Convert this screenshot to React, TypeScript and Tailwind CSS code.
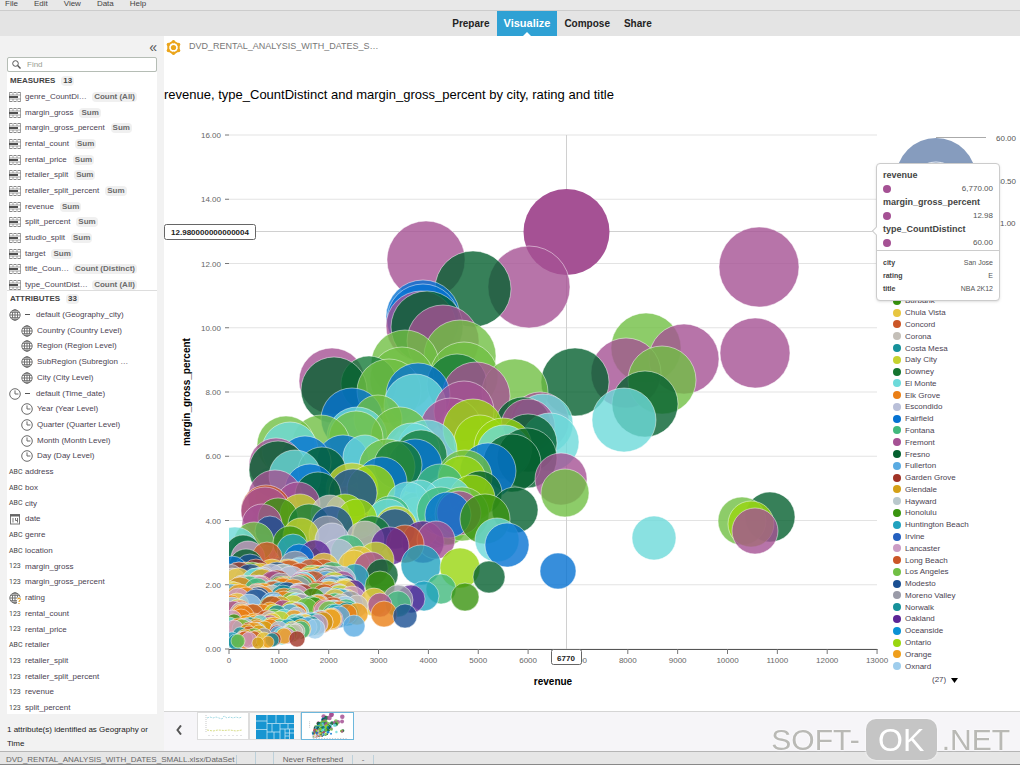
import React from "react";

const sans = "font-['Liberation_Sans',Arial,sans-serif]";

const C = {
  plum: "#a55194", forest: "#05602f", pine: "#157a38", leaf: "#71bf44", blue: "#0572d2", cyan: "#6ddada",
  lime: "#99d60f", olive: "#c5d22e", navy: "#1a4f92", teal: "#21a2bf", jade: "#41b97d", grass: "#39940f",
  violet: "#5c2596", rust: "#cb5627", brick: "#a03326", orange: "#ea7f16", amber: "#ef9f1c", gold: "#d4a017",
  sand: "#c4bfb8", steel: "#9a9ba8", sky: "#5aabe2", pink: "#cb9cc4", pale: "#9fcdec", sea: "#16919a",
  yellow: "#e7c640", lilac: "#b9bfd8", mist: "#b9c8cc", royal: "#2460c0",
};

type Bubble = [number, number, number, string];

const bubbles: Bubble[] = [
  [426, 260, 39, C.plum], [473, 289, 38, C.forest], [529, 287, 41, C.plum], [759, 267, 40, C.plum], [755, 353, 35, C.plum],
  [423, 317, 37, C.blue], [421, 326, 35, C.plum], [423, 320, 36, C.blue], [427, 327, 36, C.forest], [443, 341, 36, C.plum],
  [460, 356, 36, C.leaf], [405, 364, 34, C.leaf], [464, 376, 34, C.leaf], [332, 381, 33, C.plum], [402, 379, 32, C.leaf],
  [334, 390, 33, C.forest], [369, 384, 28, C.pine], [389, 391, 32, C.leaf], [418, 395, 32, C.blue], [415, 405, 31, C.cyan],
  [457, 384, 30, C.pine], [476, 396, 34, C.plum], [464, 411, 30, C.plum], [515, 392, 33, C.leaf], [575, 382, 34, C.forest],
  [352, 419, 31, C.blue], [357, 437, 30, C.cyan], [356, 438, 27, C.leaf], [378, 419, 24, C.leaf], [286, 445, 29, C.leaf],
  [290, 450, 28, C.cyan], [321, 444, 29, C.leaf], [400, 436, 29, C.leaf], [451, 429, 31, C.plum], [473, 429, 30, C.lime],
  [480, 441, 26, C.lime], [427, 450, 30, C.cyan], [412, 451, 28, C.cyan], [421, 456, 26, C.pine], [415, 466, 27, C.blue],
  [305, 462, 26, C.blue], [343, 461, 26, C.blue], [365, 457, 22, C.cyan], [387, 467, 28, C.leaf], [398, 465, 24, C.pine],
  [276, 465, 27, C.plum], [278, 470, 29, C.forest], [295, 476, 26, C.cyan], [322, 471, 24, C.forest], [382, 482, 25, C.blue],
  [310, 489, 25, C.blue], [318, 495, 23, C.forest], [352, 489, 26, C.olive], [353, 493, 24, C.navy], [371, 489, 24, C.lime],
  [275, 497, 27, C.plum], [298, 504, 22, C.plum], [265, 511, 24, C.plum], [266, 510, 25, C.rust], [523, 425, 28, C.forest],
  [540, 421, 29, C.plum], [528, 426, 27, C.plum], [543, 424, 30, C.cyan], [550, 442, 29, C.cyan], [528, 443, 29, C.forest],
  [527, 458, 30, C.forest], [503, 447, 29, C.lime], [504, 452, 27, C.cyan], [512, 463, 29, C.forest], [488, 471, 28, C.blue],
  [465, 477, 27, C.leaf], [462, 480, 24, C.lime], [480, 493, 22, C.forest], [440, 488, 24, C.jade], [448, 501, 24, C.cyan],
  [472, 498, 23, C.lime], [441, 511, 24, C.jade], [459, 513, 22, C.plum], [448, 515, 23, C.blue], [485, 519, 25, C.grass],
  [462, 514, 27, C.leaf], [515, 510, 23, C.forest], [561, 479, 26, C.plum], [565, 493, 24, C.leaf], [497, 540, 22, C.cyan],
  [507, 545, 22, C.blue], [558, 571, 18, C.blue], [460, 568, 20, C.lime], [489, 577, 16, C.forest], [465, 597, 14, C.grass],
  [441, 589, 15, C.jade], [424, 596, 15, C.teal], [411, 599, 14, C.violet], [405, 616, 12, C.navy], [421, 565, 20, C.teal],
  [423, 542, 21, C.violet], [436, 540, 19, C.plum], [646, 348, 35, C.leaf], [684, 359, 35, C.plum], [626, 373, 35, C.plum],
  [662, 380, 34, C.leaf], [645, 404, 33, C.forest], [624, 420, 32, C.cyan], [654, 538, 22, C.cyan], [770, 517, 25, C.forest],
  [742, 521, 24, C.leaf], [751, 524, 23, C.lime], [755, 531, 23, C.plum], [390, 546, 19, C.violet], [405, 544, 19, C.rust],
  [395, 529, 20, C.navy], [396, 527, 21, C.olive], [408, 504, 22, C.cyan], [420, 500, 20, C.cyan], [390, 516, 20, C.jade],
  [388, 520, 21, C.cyan], [357, 519, 20, C.lime], [345, 514, 20, C.lime], [332, 527, 21, C.navy], [309, 525, 21, C.pine],
  [278, 518, 20, C.grass], [300, 514, 20, C.olive], [254, 542, 20, C.leaf], [270, 531, 15, C.navy], [301, 536, 18, C.olive],
  [290, 543, 17, C.grass], [293, 550, 16, C.teal], [327, 534, 18, C.steel], [332, 540, 17, C.lilac], [365, 540, 19, C.sand],
  [372, 535, 19, C.pine], [330, 514, 19, C.sand], [371, 569, 17, C.plum], [382, 575, 16, C.forest], [376, 560, 18, C.olive],
  [355, 578, 14, C.teal], [380, 586, 15, C.grass], [354, 591, 11, C.violet], [374, 602, 14, C.yellow], [380, 605, 12, C.plum],
  [384, 614, 13, C.orange], [398, 600, 15, C.steel], [398, 604, 13, C.jade], [297, 639, 8, C.brick], [277, 633, 8, C.brick],
  [296, 613, 10, C.brick], [333, 613, 13, C.rust], [322, 622, 11, C.rust], [340, 614, 13, C.orange], [315, 629, 10, C.pale],
  [354, 626, 11, C.sky], [357, 606, 11, C.sand], [357, 614, 11, C.amber], [347, 614, 12, C.sea], [235, 550, 23, C.cyan],
  [243, 553, 18, C.forest], [248, 558, 17, C.pink], [246, 566, 17, C.forest], [250, 570, 16, C.navy], [232, 572, 16, C.blue],
  [258, 582, 14, C.olive], [318, 595, 14, C.rust], [302, 606, 12, C.pink], [324, 568, 15, C.yellow], [300, 577, 14, C.rust],
  [262, 524, 20, C.plum], [236, 642, 8, C.sea], [258, 643, 6, C.gold], [240, 634, 7, C.sea], [267, 557, 15, C.rust],
  [315, 556, 16, C.violet], [338, 556, 17, C.lilac], [348, 552, 17, C.jade], [359, 562, 16, C.yellow], [354, 566, 16, C.yellow],
  [295, 567, 16, C.steel], [299, 559, 15, C.blue], [352, 600, 14, C.pink], [345, 592, 14, C.mist], [350, 604, 13, C.steel],
  [270, 612, 10, C.amber], [268, 642, 6, C.amber], [257, 631, 9, C.pale], [247, 614, 10, C.teal], [287, 636, 8, C.pink],
  [238, 600, 12, C.pink], [246, 624, 9, C.amber], [234, 622, 8, C.grass], [316, 583, 14, C.sky], [272, 597, 12, C.mist],
];

const mix = [
  C.amber, C.teal, C.pink, C.rust, C.olive, C.sand, C.jade, C.navy, C.orange, C.sky, C.plum, C.steel, C.leaf,
  C.gold, C.lilac, C.brick, C.sea, C.yellow, C.pale, C.rust, C.grass, C.orange, C.pink, C.cyan, C.amber,
];

let seed = 20127;
function next() {
  seed = (seed * 1103515245 + 12345) % 2147483648;
  return seed / 2147483648;
}

function lowBubbles(): Bubble[] {
  const out: Bubble[] = [];
  for (let i = 0; i < 250; i++) {
    const x = 229 + next() * 118;
    const low = x < 270 ? 645 : 645 - (x - 270) * 0.32;
    const top = 568 + Math.abs(x - 290) * 0.1 + next() * 8;
    const y = top + next() * (low - top);
    const r = 6 + (648 - y) / 8 + next() * 2;
    out.push([Math.round(x), Math.round(Math.min(y, low - r * 0.6)), Math.round(r), mix[Math.floor(next() * mix.length)]]);
  }
  return out;
}

function backdropBubbles(): Bubble[] {
  const out: Bubble[] = [];
  const mid = [C.leaf, C.cyan, C.pine, C.jade, C.olive, C.plum, C.blue, C.lime];
  for (let i = 0; i < 90; i++) {
    const x = 268 + next() * 185;
    const y = 480 + next() * 50;
    out.push([Math.round(x), Math.round(y), Math.round(16 + next() * 5), mid[Math.floor(next() * mid.length)]]);
  }
  for (let i = 0; i < 70; i++) {
    const x = 240 + next() * 130;
    const y = 535 + next() * 40;
    out.push([Math.round(x), Math.round(y), Math.round(14 + next() * 4), mix[Math.floor(next() * mix.length)]]);
  }
  return out;
}

const byTop = (a: Bubble, b: Bubble) => a[1] - a[2] - (b[1] - b[2]);
const plotted = [...backdropBubbles().sort(byTop), ...[...bubbles, ...lowBubbles()].sort(byTop)];

const measures: [string, string][] = [
  ["genre_CountDi…", "Count (All)"], ["margin_gross", "Sum"], ["margin_gross_percent", "Sum"], ["rental_count", "Sum"],
  ["rental_price", "Sum"], ["retailer_split", "Sum"], ["retailer_split_percent", "Sum"], ["revenue", "Sum"],
  ["split_percent", "Sum"], ["studio_split", "Sum"], ["target", "Sum"], ["title_Coun…", "Count (Distinct)"],
  ["type_CountDist…", "Count (All)"],
];

type Kind = "globe" | "clock" | "abc" | "num" | "date" | "geo";
const attributes: [Kind, string, number][] = [
  ["globe", "default (Geography_city)", 1], ["globe", "Country (Country Level)", 2], ["globe", "Region (Region Level)", 2],
  ["globe", "SubRegion (Subregion …", 2], ["globe", "City (City Level)", 2], ["clock", "default (Time_date)", 1],
  ["clock", "Year (Year Level)", 2], ["clock", "Quarter (Quarter Level)", 2], ["clock", "Month (Month Level)", 2],
  ["clock", "Day (Day Level)", 2], ["abc", "address", 0], ["abc", "box", 0], ["abc", "city", 0], ["date", "date", 0],
  ["abc", "genre", 0], ["abc", "location", 0], ["num", "margin_gross", 0], ["num", "margin_gross_percent", 0],
  ["geo", "rating", 0], ["num", "rental_count", 0], ["num", "rental_price", 0], ["abc", "retailer", 0],
  ["num", "retailer_split", 0], ["num", "retailer_split_percent", 0], ["num", "revenue", 0], ["num", "split_percent", 0],
];

const cities: [string, string][] = [
  ["Burbank", C.grass], ["Chula Vista", C.yellow], ["Concord", C.rust], ["Corona", C.sand], ["Costa Mesa", C.sea],
  ["Daly City", C.olive], ["Downey", "#15742f"], ["El Monte", C.cyan], ["Elk Grove", C.orange], ["Escondido", C.lilac],
  ["Fairfield", C.blue], ["Fontana", C.jade], ["Fremont", C.plum], ["Fresno", C.forest], ["Fullerton", C.sky],
  ["Garden Grove", C.brick], ["Glendale", C.gold], ["Hayward", C.mist], ["Honolulu", C.grass], ["Huntington Beach", C.teal],
  ["Irvine", C.royal], ["Lancaster", C.pink], ["Long Beach", C.rust], ["Los Angeles", C.leaf], ["Modesto", C.navy],
  ["Moreno Valley", C.steel], ["Norwalk", C.sea], ["Oakland", C.violet], ["Oceanside", "#0a91d4"], ["Ontario", C.lime],
  ["Orange", C.amber], ["Oxnard", C.pale],
];

function MeasureIcon() {
  return (
    <svg width="12" height="10" viewBox="0 0 12 10" className="shrink-0">
      <path d="M0 0.5H3.500M4.500 0.5H7.500M8.500 0.5H12M0 9.500H3.500M4.500 9.500H7.500M8.500 9.500H12" stroke="#8a8a8a" />
      <path d="M0.5 0V10M11.500 0V10M4 1V3M8 1V3M4 7V9M8 7V9" stroke="#a5a5a5" />
      <path d="M0 3H12M0 7H12" stroke="#8a8a8a" strokeWidth="0.8" />
      <rect x="0" y="4" width="9" height="2" fill="#505050" />
    </svg>
  );
}

function Globe({ query = false }: { query?: boolean }) {
  return (
    <svg width="12" height="12" viewBox="0 0 12 12" className="shrink-0" fill="none" stroke="#666" strokeWidth="0.9">
      <circle cx="6" cy="6" r="5.2" />
      <ellipse cx="6" cy="6" rx="2.6" ry="5.2" />
      <path d="M6 0.8V11.2M0.8 6H11.2M1.6 3.3H10.4M1.6 8.7H10.4" />
      {query && (
        <>
          <rect x="8" y="5.5" width="4" height="6.5" fill="#fff" stroke="none" />
          <path d="M8.6 7.4C8.8 5.8 11.5 5.9 11.4 7.5C11.3 8.7 10 8.6 10 9.9M10 11V12" stroke="#e8a020" strokeWidth="1.1" />
        </>
      )}
    </svg>
  );
}

function Clock() {
  return (
    <svg width="12" height="12" viewBox="0 0 12 12" className="shrink-0" fill="none" stroke="#6a6a6a" strokeWidth="1">
      <circle cx="6" cy="6" r="5.3" />
      <path d="M6 2.4V6H9.4" />
    </svg>
  );
}

function KindIcon({ kind }: { kind: Kind }) {
  if (kind === "globe") return <Globe />;
  if (kind === "geo") return <Globe query />;
  if (kind === "clock") return <Clock />;
  if (kind === "date")
    return (
      <svg width="12" height="12" viewBox="0 0 12 12" className="shrink-0">
        <rect x="1.5" y="1.5" width="9" height="9.5" fill="#fff" stroke="#777" />
        <path d="M1 2.500H11" stroke="#666" strokeWidth="2" />
        <path d="M4 5V9.500M6.500 5V7.500H8.500M8.500 5V9.500" stroke="#666" strokeWidth="0.9" fill="none" />
      </svg>
    );
  return (
    <span className="w-3 shrink-0 font-['Roboto',sans-serif] text-[7px] text-[#444]">{kind === "abc" ? "ABC" : "123"}</span>
  );
}

function Sidebar() {
  return (
    <aside className="flex w-[164px] shrink-0 flex-col bg-[#f2f2f2] pr-[7px] pl-[7px] text-[8px] text-[#4b4352]">
      <div className="flex h-5 shrink-0 items-center justify-end">
        <button aria-label="Collapse panel" className="h-4 text-[14px] leading-[11px] text-[#555]">«</button>
      </div>
      <label className="flex h-[15px] w-[150px] shrink-0 items-center gap-1.5 rounded-xs border border-[#b5bdb5] bg-white px-1">
        <svg width="9" height="9" viewBox="0 0 9 9" fill="none" stroke="#555">
          <circle cx="3.5" cy="3.5" r="2.8" />
          <path d="M5.6 5.6L8.5 8.5" strokeWidth="1.4" />
        </svg>
        <input aria-label="Find" placeholder="Find" className="w-24 bg-transparent outline-none placeholder:text-[#9a9f92]" />
      </label>
      <div className="flex min-h-0 w-[150px] flex-1 flex-col overflow-hidden bg-white">
        <section className="h-[219px] shrink-0 overflow-hidden border-b border-[#ddd]">
          <h2 className="flex h-[17px] items-center gap-1.5 pl-[3px] font-bold text-[#444]">
            MEASURES <span className="rounded-sm bg-[#f0f0f0] px-0.5 leading-[10px]">13</span>
          </h2>
          <ul className="flex h-[204px] flex-col">
            {measures.map(([name, agg]) => (
              <li key={name} className="flex flex-1 items-center gap-1 pl-0.5 whitespace-nowrap">
                <MeasureIcon />
                <span>{name}</span>
                <span className={`rounded-sm bg-[#f0f0f0] px-0.5 leading-[10px] font-bold text-[#6b6b6b] ${agg === "Sum" ? "ml-0.5" : "mr-5 ml-auto"}`}>{agg}</span>
              </li>
            ))}
          </ul>
        </section>
        <h2 className="flex h-4 shrink-0 items-center gap-1.5 pl-[3px] font-bold text-[#444]">
          ATTRIBUTES <span className="rounded-sm bg-[#f0f0f0] px-0.5 leading-[10px]">33</span>
        </h2>
        <ul className="flex h-[409px] shrink-0 flex-col">
          {attributes.map(([kind, name, level], i) => (
            <li key={i} className={`flex flex-1 items-center gap-1 whitespace-nowrap ${level === 2 ? "pl-[14px]" : "pl-0.5"}`}>
              <KindIcon kind={kind} />
              {level === 1 && <span className="mr-0.5 h-px w-[5px] bg-[#555]" />}
              <span>{name}</span>
            </li>
          ))}
        </ul>
      </div>
      <p className="h-[37px] shrink-0 pt-[9px] leading-[14px] text-[#222]">1 attribute(s) identified as Geography or Time</p>
    </aside>
  );
}

function BubbleChart() {
  const xTicks = Array.from({ length: 14 }, (_, i) => i);
  const yTicks = Array.from({ length: 9 }, (_, i) => i);
  return (
    <svg viewBox="164 112 716 590" className="block w-full overflow-visible" fontFamily="Liberation Sans, Arial, sans-serif" fontSize="8">
      <defs>
        <clipPath id="plot">
          <rect x="229" y="130" width="650" height="519" />
        </clipPath>
      </defs>
      {yTicks.map((i) => (
        <g key={i}>
          <path d={`M229 ${649 - i * 64.25}H877`} stroke="#e3e3e3" />
          <path d={`M225 ${649 - i * 64.25}H229`} stroke="#777" />
          <text x="221" y={652 - i * 64.25} textAnchor="end" fill="#666">{(i * 2).toFixed(2)}</text>
        </g>
      ))}
      <path d="M256 231.5H877M566.5 135V649" stroke="#d0d0d0" />
      <g clipPath="url(#plot)">
        <circle cx="566.5" cy="232" r="43" fill="#a55194" />
        {plotted.map(([x, y, r, color], i) => (
          <circle key={i} cx={x} cy={y} r={r} fill={color} fillOpacity="0.8" stroke="#fff" strokeOpacity="0.6" strokeWidth="0.8" />
        ))}
      </g>
      <path d="M229 649.5H877.5" stroke="#555" />
      {xTicks.map((i) => (
        <g key={i}>
          <path d={`M${229 + i * 49.85} 649V654`} stroke="#777" />
          <text x={229 + i * 49.85} y="663" textAnchor="middle" fill="#666">{i * 1000}</text>
        </g>
      ))}
      <rect x="551.5" y="649.5" width="30" height="15" rx="2" fill="#fff" stroke="#666" />
      <text x="566" y="661" textAnchor="middle" fontWeight="bold" fill="#222">6770</text>
      <rect x="164.5" y="224.5" width="91" height="15" rx="2" fill="#fff" stroke="#666" />
      <text x="210" y="235" textAnchor="middle" fontWeight="bold" fill="#222">12.980000000000004</text>
      <text x="553" y="685" textAnchor="middle" fontSize="10" fontWeight="bold">revenue</text>
      <text transform="translate(190 392) rotate(-90)" textAnchor="middle" fontSize="10" fontWeight="bold">margin_gross_percent</text>
    </svg>
  );
}

function Tooltip() {
  const values = [["revenue", "6,770.00"], ["margin_gross_percent", "12.98"], ["type_CountDistinct", "60.00"]];
  const facts = [["city", "San Jose"], ["rating", "E"], ["title", "NBA 2K12"]];
  return (
    <div role="tooltip" className="absolute top-[51px] -left-1 w-[124px] rounded-sm border border-[#ccc] bg-white text-[8px] text-[#555] shadow-sm">
      <span className="absolute top-16 -left-[4px] size-[6px] rotate-45 border-b border-l border-[#ccc] bg-white" />
      <dl className="px-1.5 pt-[5px]">
        {values.map(([k, v]) => (
          <div key={k} className="h-[27px]">
            <dt className="text-[9px] leading-[13px] font-bold text-[#444]">{k}</dt>
            <dd className="flex items-center justify-between leading-[14px]">
              <span className="size-2 rounded-full bg-[#a55194]" />
              {v}
            </dd>
          </div>
        ))}
      </dl>
      <dl className="border-t border-[#ccc] px-1.5 py-[5px] text-[7px] leading-[13px]">
        {facts.map(([k, v]) => (
          <div key={k} className="flex justify-between">
            <dt className="font-bold text-[#444]">{k}</dt>
            <dd>{v}</dd>
          </div>
        ))}
      </dl>
    </div>
  );
}

function Legend() {
  return (
    <div className="relative w-[140px] shrink-0 text-[8px] text-[#4b4352]">
      <svg viewBox="880 112 140 183" className="block w-full" fontFamily="Liberation Sans, Arial, sans-serif" fontSize="8">
        <circle cx="936" cy="178" r="40" fill="#869cbe" />
        <circle cx="936" cy="190" r="28" fill="none" stroke="#fff" strokeOpacity="0.8" />
        <path d="M936 137.5H986" stroke="#aaa" />
        <text x="996" y="141" fill="#555">60.00</text>
        <text x="996" y="184" fill="#555">30.50</text>
        <text x="1000" y="226" fill="#555">1.00</text>
      </svg>
      <ul className="flex h-[377px] flex-col pl-[13px] leading-[11px]">
        {cities.map(([name, color]) => (
          <li key={name} className="flex flex-1 items-center gap-1">
            <svg width="8" height="8" viewBox="0 0 8 8">
              <circle cx="4" cy="4" r="4" fill={color} />
            </svg>
            {name}
          </li>
        ))}
      </ul>
      <button className="flex h-4 items-center gap-[5px] pl-[52px]">
        (27)
        <svg width="7" height="5" viewBox="0 0 7 5">
          <path d="M0 0H7L3.5 5Z" />
        </svg>
      </button>
      <Tooltip />
    </div>
  );
}

function Thumbnails() {
  return (
    <div className="flex h-10 shrink-0 items-start border-t border-[#d5d5d5] bg-[#f6f5f8] pl-[9px]">
      <button aria-label="Previous" className="mr-3 flex h-9 w-3 items-center justify-center">
        <svg width="6" height="10" viewBox="0 0 6 10" fill="none" stroke="#555" strokeWidth="2">
          <path d="M5 0.5L1.5 5L5 9.5" />
        </svg>
      </button>
      <button aria-label="Line chart" className="h-[28px] w-[52px] border border-[#ddd] bg-white">
        <svg viewBox="0 0 50 26" className="size-full" fill="none">
          <path d="M9 5L12 4L15 5L18 4L21 5L24 6L26 3L29 5L32 4L35 5L38 4L41 5L44 4" stroke="#8fd0dc" strokeWidth="0.8" strokeDasharray="2 1" />
          <path d="M9 17L15 18L20 17L26 17.5L32 17L38 18L44 17" stroke="#cdd36a" strokeWidth="0.8" strokeDasharray="2 1" />
          <path d="M8 2V20M11 22V24M15 22V24M19 22V24M23 22V24M27 22V24M31 22V24M35 22V24M39 22V24M43 22V24" stroke="#bbb" strokeWidth="0.8" strokeDasharray="1 1" />
        </svg>
      </button>
      <button aria-label="Tree map" className="h-[28px] w-[52px] border border-[#ddd] bg-[#f8f8f8]">
        <svg viewBox="0 0 50 26" className="size-full">
          <rect x="6" y="2" width="38" height="24" fill="#1795d1" />
          <path d="M17 2V26M6 8H17M6 16.500H17M17 10.500H44M26 2V10M35 2V10M17 19H30M22 11V19M30 11V26M38 11V16M24 19V26M30 16H44M35 16V26M39.500 16V26M35 20H44M35 23H39" stroke="#d9eef8" strokeWidth="0.7" fill="none" />
        </svg>
      </button>
      <button aria-label="Bubble chart" className="h-[28px] w-[53px] border border-[#6db7dc] bg-white">
        <svg viewBox="40 200 910 464" className="size-full">
          <circle cx="566" cy="232" r="43" fill="#a55194" />
          {bubbles.map(([x, y, r, color], i) => (
            <circle key={i} cx={x} cy={y} r={r} fill={color} fillOpacity="0.85" />
          ))}
          <path d="M240 656H860" stroke="#aaa" strokeWidth="12" strokeDasharray="20 28" />
          <path d="M175 350V470" stroke="#aaa" strokeWidth="12" strokeDasharray="16 16" />
        </svg>
      </button>
    </div>
  );
}

export default function App() {
  return (
    <div className={`relative flex h-screen flex-col overflow-hidden bg-white ${sans}`}>
      <nav aria-label="Menu" className="flex h-[11px] shrink-0 items-start gap-4 overflow-hidden border-b border-[#ccc] bg-[#e8e8e8] pl-[5px] text-[8px] leading-[7px] text-[#444]">
        {["File", "Edit", "View", "Data", "Help"].map((m) => (
          <button key={m}>{m}</button>
        ))}
      </nav>
      <nav aria-label="Rooms" className="flex h-[25px] shrink-0 items-center justify-center bg-[#e4e4e4] pl-[84px] text-[10px] font-bold text-[#222]">
        <a href="#prepare" className="px-[7px]">Prepare</a>
        <a href="#visualize" className="relative flex h-full items-center bg-[#2fa1d4] px-[7px] text-[11px] text-white">
          Visualize
          <svg width="8" height="4" viewBox="0 0 8 4" className="absolute bottom-0 left-1/2 -ml-1">
            <path d="M0 4L4 0L8 4Z" fill="#fff" />
          </svg>
        </a>
        <a href="#compose" className="px-[7px]">Compose</a>
        <a href="#share" className="px-[7px]">Share</a>
      </nav>
      <div className="flex min-h-0 flex-1">
        <div className="flex bg-[#f2f2f2] pt-px">
          <Sidebar />
        </div>
        <main className="flex min-w-0 flex-1 flex-col">
          <header className="flex h-[22px] shrink-0 items-center gap-2 pl-[2px] text-[9px] text-[#777]">
            <svg width="15" height="15" viewBox="0 0 15 15" className="shrink-0">
              <path d="M7.500 1.500L12.700 4.500V10.500L7.500 13.500L2.300 10.500V4.500Z" fill="#fff" stroke="#eba51c" strokeWidth="2" />
              <circle cx="7.500" cy="7.500" r="2.600" fill="#eba51c" />
              <g fill="#eba51c">
                <circle cx="7.500" cy="1.700" r="1.700" /><circle cx="12.600" cy="4.500" r="1.700" /><circle cx="12.600" cy="10.500" r="1.700" />
                <circle cx="7.500" cy="13.300" r="1.700" /><circle cx="2.400" cy="10.500" r="1.700" /><circle cx="2.400" cy="4.500" r="1.700" />
              </g>
            </svg>
            DVD_RENTAL_ANALYSIS_WITH_DATES_S…
          </header>
          <h1 className="h-[54px] shrink-0 pt-[29px] text-[13px] leading-4 text-black">
            revenue, type_CountDistinct and margin_gross_percent by city, rating and title
          </h1>
          <div className="flex min-h-0 flex-1 overflow-hidden">
            <div className="min-w-0 flex-1">
              <BubbleChart />
            </div>
            <Legend />
          </div>
          <Thumbnails />
        </main>
      </div>
      <footer className="flex h-[14px] shrink-0 items-end border-t border-[#b5b5b5] border-b border-b-[#888] bg-[#e6e6e6] pl-1.5 text-[8px] leading-[9px] text-[#666]">
        <span className="w-[231px] border-r border-[#bcd0da]">DVD_RENTAL_ANALYSIS_WITH_DATES_SMALL.xlsx/DataSet</span>
        <span className="h-full w-[19px] border-r border-[#bcd0da]" />
        <span className="h-full w-[18px] border-r border-[#bcd0da]" />
        <span className="w-[79px] border-r border-[#bcd0da] text-center">Never Refreshed</span>
        <span className="w-[21px] border-r border-[#bcd0da] text-center">-</span>
      </footer>
      <div className="pointer-events-none absolute right-[10px] bottom-[5px] flex items-center text-[30px] leading-none text-[#b9b9b5] drop-shadow-[0_0_1px_#fff]">
        SOFT-
        <span className="mr-[5px] ml-1.5 flex h-[41px] w-[71px] items-center justify-center rounded-[10px] bg-[#c5c5c5] text-[32px] text-white">OK</span>
        .NET
      </div>
    </div>
  );
}
